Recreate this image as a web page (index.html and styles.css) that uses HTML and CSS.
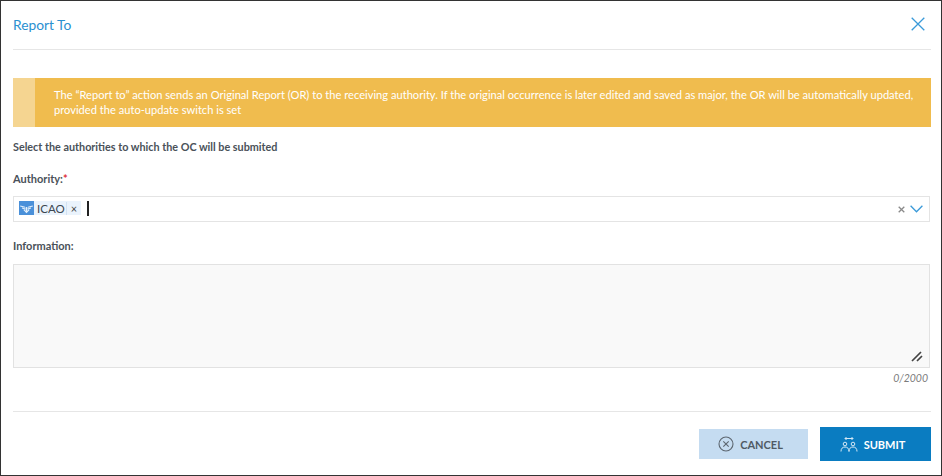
FILE: index.html
```html
<!DOCTYPE html>
<html lang="en">
<head>
<meta charset="utf-8">
<title>Report To</title>
<link rel="stylesheet" href="styles.css">
</head>
<body>
<div class="dialog">
  <header class="head">
    <h1 class="title">Report To</h1>
    <svg class="close" width="14" height="14" viewBox="0 0 14 14"><path d="M.7 .7 13.300 13.300M13.300 .7 .7 13.300" stroke="#3a9ad9" stroke-width="1.300" fill="none"/></svg>
  </header>
  <div class="banner">
    <div class="banner-tab"></div>
    <p class="banner-text">The “Report to” action sends an Original Report (OR) to the receiving authority. If the original occurrence is later edited and saved as major, the OR will be automatically updated, provided the auto-update switch is set</p>
  </div>
  <p class="intro">Select the authorities to which the OC will be submited</p>
  <label class="label auth-label">Authority:<span class="req">*</span></label>
  <div class="select">
    <span class="tag">
      <svg class="tag-logo" width="15" height="14" viewBox="0 0 15 14"><rect width="15" height="14" fill="#4a90d9"/><g stroke="#e4f0fb" stroke-width="1.100" fill="none"><path d="M1.200 5 6 6.300M13.800 5 9 6.300M3 6.900 6.400 8M12 6.900 8.600 8M4.800 8.700 7.500 11.500 10.200 8.700"/><path d="M7.500 6v5" stroke-width="1.600"/></g></svg>
      <span class="tag-name">ICAO</span>
      <span class="tag-x">×</span>
    </span>
    <span class="caret"></span>
    <span class="select-tools">
      <svg width="7" height="7" viewBox="0 0 7 7"><path d="M.7 .7 6.300 6.300M6.300 .7 .7 6.300" stroke="#8a8a8a" stroke-width="1.300" fill="none"/></svg>
      <svg width="13" height="8" viewBox="0 0 13 8"><path d="M.6 .8 6.500 6.800 12.400 .8" stroke="#3a9ad9" stroke-width="1.300" fill="none"/></svg>
    </span>
  </div>
  <label class="label info-label">Information:</label>
  <div class="area">
    <svg class="grip" width="13" height="11" viewBox="0 0 13 11"><path d="M1 10 10 1M6 10 11 5" stroke="#444" stroke-width="1.700" fill="none"/></svg>
  </div>
  <div class="count">0/2000</div>
  <footer class="foot">
    <button class="btn cancel" type="button">
      <svg width="16" height="16" viewBox="0 0 16 16"><circle cx="8" cy="8" r="7" stroke="#5c6670" stroke-width="1.100" fill="none"/><path d="M5.300 5.300 10.700 10.700M10.700 5.300 5.300 10.700" stroke="#5c6670" stroke-width="1.100"/></svg>
      CANCEL
    </button>
    <button class="btn submit" type="button">
      <svg width="18" height="16" viewBox="0 0 18 16"><g stroke="#d5e8f5" stroke-width="1" fill="none"><circle cx="5" cy="8" r="1.800"/><circle cx="13" cy="8" r="1.800"/><path d="M1 15.500c0-3 1.500-4.500 4-4.500s4 1.500 4 4.500M9 15.500c0-3 1.500-4.500 4-4.500s4 1.500 4 4.500"/><path d="M5 2.500h8M6.500 1 5 2.500 6.500 4M11.500 1 13 2.500 11.500 4"/></g></svg>
      SUBMIT
    </button>
  </footer>
</div>
</body>
</html>
```
FILE: styles.css
```css
* { box-sizing: border-box; }
html, body { margin: 0; padding: 0; }
body {
  width: 942px;
  height: 476px;
  overflow: hidden;
  background: #fff;
  font-family: Lato, "Liberation Sans", sans-serif;
}
.dialog {
  width: 942px;
  height: 476px;
  border: 1px solid #333;
  padding: 0 10px 0 12px;
  display: flex;
  flex-direction: column;
}
.head {
  height: 49px;
  border-bottom: 1px solid #e6e6e6;
  display: flex;
  align-items: center;
  justify-content: space-between;
  padding: 0 6px 2px 0;
  flex: none;
}
.title {
  margin: 0;
  font-size: 13.800px;
  font-weight: 400;
  color: #2a90d0;
}
.banner {
  margin-top: 28px;
  height: 49px;
  background: #f0bc4e;
  display: flex;
  flex: none;
}
.banner-tab {
  width: 22px;
  background: #f5d591;
  flex: none;
}
.banner-text {
  margin: 0;
  padding: 9px 10px 0 19px;
  font-size: 11.130px;
  line-height: 15px;
  color: #fff;
}
.intro {
  margin: 13px 0 0;
  font-size: 10.800px;
  line-height: 14px;
  font-weight: 700;
  color: #4a5159;
}
.label {
  display: block;
  font-size: 11px;
  line-height: 14px;
  font-weight: 700;
  color: #4a5159;
}
.auth-label { margin-top: 18px; }
.req { color: #e0313a; }
.select {
  margin-top: 10px;
  height: 26px;
  margin-right: 1px;
  border: 1px solid #e4e4e4;
  display: flex;
  align-items: center;
  padding: 0 6px 0 5px;
  flex: none;
}
.tag {
  display: flex;
  align-items: center;
  height: 14px;
  margin-top: -2px;
  background: #eaf3fc;
}
.tag-logo { display: block; }
.tag-name {
  font-size: 11.500px;
  color: #3c4650;
  padding: 0 1px 0 3px;
  border-right: 1px solid #d2e2f2;
}
.tag-x {
  font-size: 11px;
  color: #444;
  padding: 0 4px;
}
.caret {
  width: 2px;
  height: 15px;
  margin-top: -2px;
  background: #222;
  margin-left: 6px;
}
.select-tools {
  margin-left: auto;
  display: flex;
  align-items: center;
  gap: 5px;
}
.info-label { margin-top: 17px; }
.area {
  margin-top: 11px;
  margin-right: 1px;
  height: 104px;
  background: #f9f9f9;
  border: 1px solid #e2e2e2;
  display: flex;
  align-items: flex-end;
  justify-content: flex-end;
  padding: 0 5px 5px 0;
  flex: none;
}
.count {
  margin-top: 4px;
  text-align: right;
  padding-right: 3px;
  font-size: 10.500px;
  line-height: 13px;
  font-style: italic;
  color: #7b7b7b;
}
.foot {
  margin-top: 26px;
  height: 64px;
  border-top: 1px solid #e6e6e6;
  display: flex;
  justify-content: flex-end;
  align-items: flex-start;
  gap: 12px;
  padding-top: 15px;
  flex: none;
}
.btn {
  border: 0;
  font-family: inherit;
  font-size: 11px;
  font-weight: 700;
  display: flex;
  align-items: center;
  justify-content: center;
  gap: 6px;
  padding: 0 6px 0 0;
}
.cancel {
  width: 109px;
  height: 30px;
  margin-top: 2px;
  background: #c5dcf1;
  color: #505a64;
}
.submit {
  width: 111px;
  height: 34px;
  background: #0a7cc1;
  color: #fff;
}
```
